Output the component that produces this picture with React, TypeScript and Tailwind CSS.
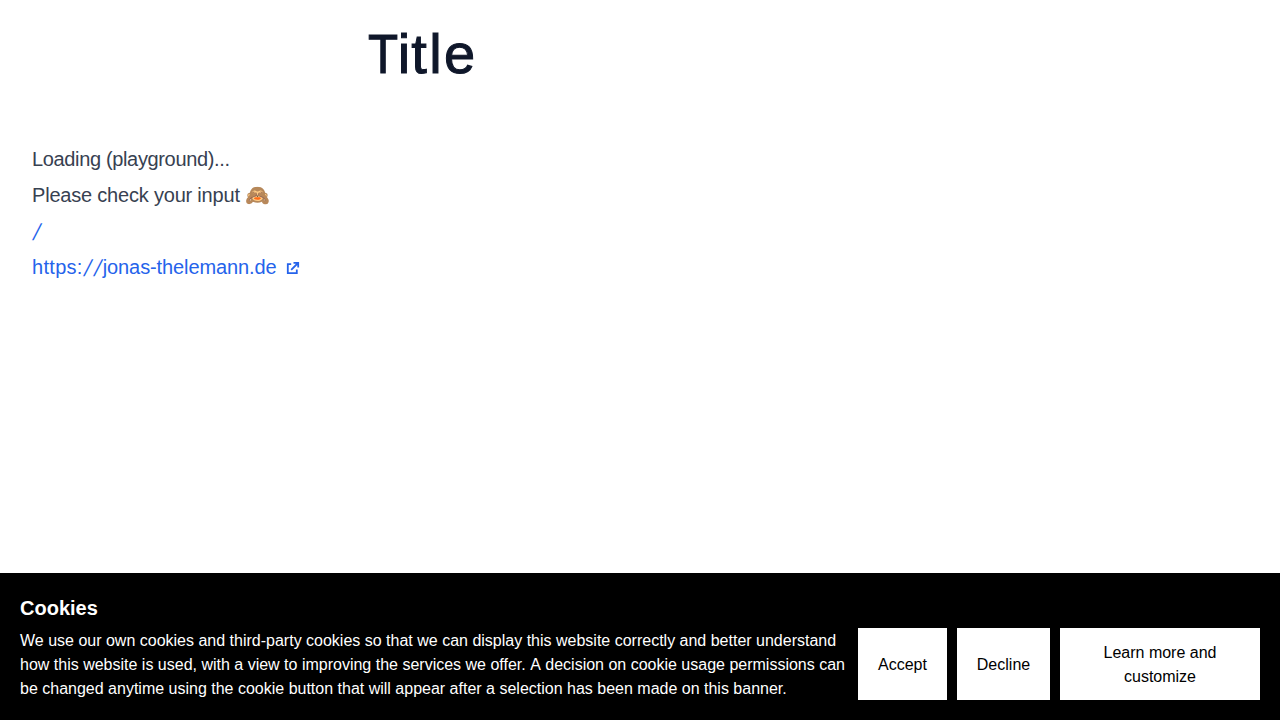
function Slash() {
  return <span className="inline-block w-[10px] translate-y-px -skew-x-[18deg] scale-y-[1.15] text-center">/</span>;
}

function ExternalIcon() {
  return (
    <svg className="mt-px size-4" viewBox="0 0 16 16" fill="none" stroke="currentColor" strokeWidth="1.8">
      <path d="M6.2 4.2H2.8v9h9V9.6" />
      <path d="M8.5 2.8h4.7v4.7M13 3 6.2 9.8" />
    </svg>
  );
}

export default function App() {
  return (
    <div className="flex h-screen flex-col bg-white font-['Liberation_Sans',sans-serif]">
      <main className="flex-1 px-8 pt-6 text-xl text-[#374151]">
        <h1 className="ml-[336px] mb-[57px] flex w-fit text-[56px] leading-[60px] font-normal text-[#0f172a] [-webkit-text-stroke:1px_#0f172a]">
          <span className="-mr-[4.5px] inline-block origin-left scale-x-[0.88]">T</span>
          <span className="tracking-[1px]">i</span>
          <span className="tracking-[2.4px]">tle</span>
        </h1>
        <div className="flex flex-col items-start leading-9">
          <p className="tracking-[-0.35px]">Loading (playground)...</p>
          <p className="tracking-[-0.2px]">Please check your input 🙈</p>
          <a className="text-[#2563eb]"><Slash /></a>
          <a className="flex items-center gap-2 text-[#2563eb]">
            <span><span className="tracking-[0.3px]">https:</span><Slash /><Slash /><span className="tracking-[-0.1px]">jonas-thelemann.de</span></span>
            <ExternalIcon />
          </a>
        </div>
      </main>
      <footer className="flex h-[147px] items-end gap-[10px] bg-black p-5 text-base text-white">
        <div className="-mb-px flex-1">
          <h2 className="mb-[7px] text-xl leading-7 font-bold">Cookies</h2>
          <p>We use our own cookies and third-party cookies so that we can display this website correctly and better understand how this website is used, with a view to improving the services we offer.<span className="[font-kerning:none]"> A </span>decision on cookie usage permissions can be changed anytime using the cookie button that will appear after a selection has been made on this banner.</p>
        </div>
        <div className="flex h-[72px] gap-[10px] text-black">
          <button className="w-[89px] bg-white pt-0.5">Accept</button>
          <button className="w-[93px] bg-white pt-0.5">Decline</button>
          <button className="w-[200px] bg-white px-5 pt-0.5">Learn more and customize</button>
        </div>
      </footer>
    </div>
  );
}
